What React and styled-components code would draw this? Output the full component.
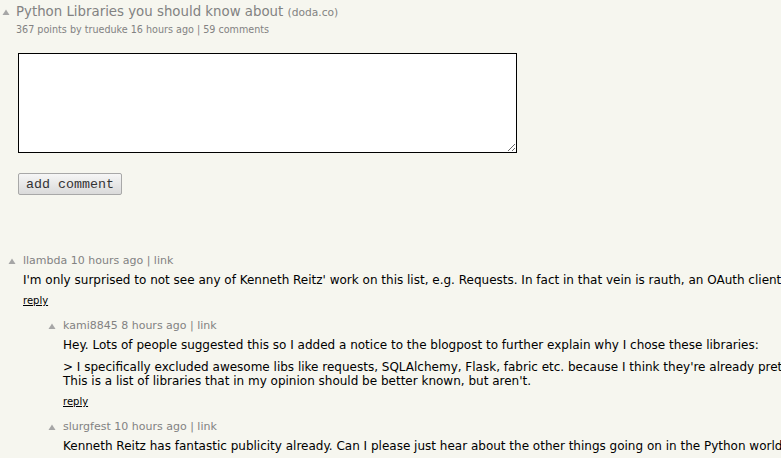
import React from 'react'
import styled, { createGlobalStyle } from 'styled-components'

const GlobalStyle = createGlobalStyle`
  html, body {
    margin: 0;
    padding: 0;
    background: #f6f6ef;
    overflow: hidden;
  }
  body {
    font-family: "DejaVu Sans", Verdana, sans-serif;
  }
`

const comments = [
  {
    user: 'llambda',
    age: '10 hours ago',
    depth: 0,
    paragraphs: [
      ["I'm only surprised to not see any of Kenneth Reitz' work on this list, e.g. Requests. In fact in that vein is rauth, an OAuth client library built on top of Requests."],
    ],
  },
  {
    user: 'kami8845',
    age: '8 hours ago',
    depth: 1,
    paragraphs: [
      ['Hey. Lots of people suggested this so I added a notice to the blogpost to further explain why I chose these libraries:'],
      [
        "> I specifically excluded awesome libs like requests, SQLAlchemy, Flask, fabric etc. because I think they're already pretty well known.",
        "This is a list of libraries that in my opinion should be better known, but aren't.",
      ],
    ],
  },
  {
    user: 'slurgfest',
    age: '10 hours ago',
    depth: 1,
    paragraphs: [
      ['Kenneth Reitz has fantastic publicity already. Can I please just hear about the other things going on in the Python world?'],
    ],
  },
]

function Arrow() {
  return (
    <VoteArrow width="10" height="10" viewBox="0 0 10 10">
      <path d="M5 2.5 L8.5 8 L1.5 8 Z" fill="#a6a6a6" />
    </VoteArrow>
  )
}

function Comment({ comment }) {
  return (
    <CommentRow depth={comment.depth}>
      <Arrow />
      <CommentBody>
        <CommentHead>{comment.user} {comment.age} | link</CommentHead>
        {comment.paragraphs.map((lines, i) => (
          <CommentText key={i}>
            {lines.map((line, j) => (
              <React.Fragment key={j}>
                {j > 0 && <br />}
                {line}
              </React.Fragment>
            ))}
          </CommentText>
        ))}
        <Reply>reply</Reply>
      </CommentBody>
    </CommentRow>
  )
}

export default function App() {
  return (
    <Page>
      <GlobalStyle />
      <StoryRow>
        <Arrow />
        <div>
          <Title>
            Python Libraries you should know about <Domain>(doda.co)</Domain>
          </Title>
          <Subtext>367 points by trueduke 16 hours ago | 59 comments</Subtext>
        </div>
      </StoryRow>

      <CommentForm>
        <TextArea />
        <Button>add comment</Button>
      </CommentForm>

      <CommentList>
        {comments.map((c, i) => (
          <Comment key={i} comment={c} />
        ))}
      </CommentList>
    </Page>
  )
}

const Page = styled.div`
  width: 1400px;
  padding: 2px 0 0 1px;
`

const VoteArrow = styled.svg`
  flex: none;
  display: block;
`

const StoryRow = styled.div`
  display: flex;
  align-items: flex-start;
  gap: 5px;

  ${VoteArrow} {
    margin-top: 5px;
  }
`

const Title = styled.div`
  font-size: 13.33px;
  color: #828282;
  line-height: 20px;
`

const Domain = styled.span`
  font-size: 10.67px;
`

const Subtext = styled.div`
  font-size: 9.6px;
  color: #828282;
  line-height: 14px;
`

const CommentForm = styled.div`
  display: flex;
  flex-direction: column;
  align-items: flex-start;
  gap: 20px;
  padding: 16px 0 0 17px;
`

const TextArea = styled.textarea`
  width: 499px;
  height: 100px;
  box-sizing: border-box;
  border: 1px solid #000;
  background: #fff;
  margin: 0;
`

const Button = styled.button`
  font-family: "Liberation Mono", monospace;
  font-size: 13.33px;
  color: #333;
  height: 22px;
  padding: 0 7px;
  border: 1px solid #a8a8a8;
  border-radius: 2px;
  background: linear-gradient(#f6f6f6, #dadada);
`

const CommentList = styled.div`
  display: flex;
  flex-direction: column;
  gap: 12px;
  padding-top: 59px;
`

const CommentRow = styled.div`
  display: flex;
  align-items: flex-start;
  gap: 6px;
  padding-left: ${props => 6 + props.depth * 40}px;

  ${VoteArrow} {
    margin-top: 2px;
  }
`

const CommentBody = styled.div`
  display: flex;
  flex-direction: column;
  align-items: flex-start;
`

const CommentHead = styled.div`
  font-size: 11px;
  color: #828282;
  line-height: 14px;
  margin-bottom: 5px;
`

const CommentText = styled.p`
  margin: 0 0 8px;
  font-size: 12px;
  line-height: 14px;
  color: #000;
  white-space: nowrap;

  & + & {
    margin-top: 0;
  }
`

const Reply = styled.a`
  font-size: 10px;
  color: #000;
  text-decoration: underline;
  line-height: 12px;
  cursor: pointer;
`
